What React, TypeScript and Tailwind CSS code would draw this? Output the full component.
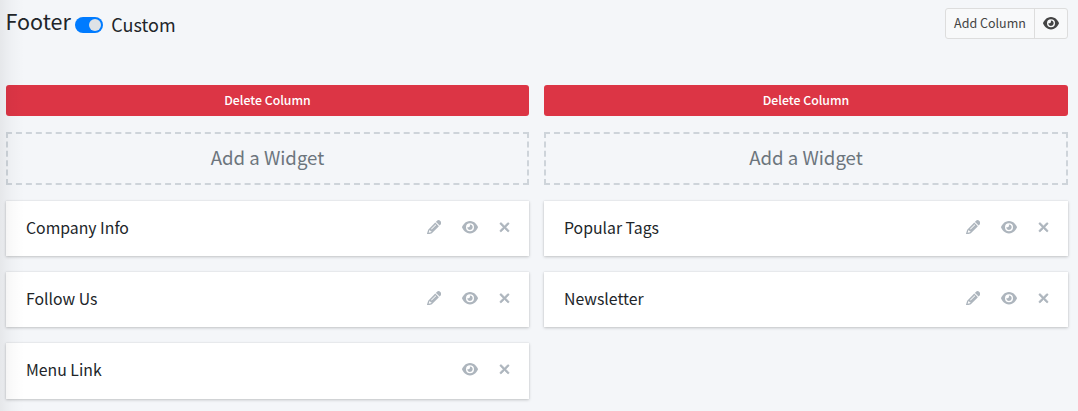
import { FaEye, FaPencil, FaXmark } from "react-icons/fa6";

type Widget = { name: string; editable: boolean };

const columns: Widget[][] = [
  [
    { name: "Company Info", editable: true },
    { name: "Follow Us", editable: true },
    { name: "Menu Link", editable: false },
  ],
  [
    { name: "Popular Tags", editable: true },
    { name: "Newsletter", editable: true },
  ],
];

function WidgetCard({ name, editable }: Widget) {
  return (
    <li className="flex h-[55px] items-start justify-between bg-white pt-[15px] pr-[19px] pl-[20px] shadow-[0_0_1px_rgba(0,0,0,0.125),0_1px_3px_rgba(0,0,0,0.2)] last:nth-3:h-[56px]">
      <span className="text-[15.8px] leading-6">{name}</span>
      <span className="mt-[3.5px] flex items-center gap-[21px] text-[#adb5bd]">
        {editable && (
          <button aria-label="Edit">
            <FaPencil className="size-[14.5px]" />
          </button>
        )}
        <button aria-label="Preview">
          <FaEye className="h-[14.5px] w-[16px]" />
        </button>
        <button aria-label="Remove">
          <FaXmark className="h-[14.5px] w-[11px] stroke-current [stroke-width:22]" />
        </button>
      </span>
    </li>
  );
}

function Column({ widgets }: { widgets: Widget[] }) {
  return (
    <section>
      <button className="block h-[31px] w-full rounded-[3px] bg-[#dc3545] pb-px text-[12.3px] leading-[30px] font-medium text-white">
        Delete Column
      </button>
      <button className="mt-4 block h-[53px] w-full border-2 border-dashed border-[#ced4da] pb-[4px] text-[18.6px] leading-[45px] text-[#6c757d]">
        Add a Widget
      </button>
      <ul className="mt-4 flex flex-col gap-4">
        {widgets.map((w) => (
          <WidgetCard key={w.name} {...w} />
        ))}
      </ul>
    </section>
  );
}

export default function App() {
  return (
    <main className="relative h-[411px] overflow-hidden bg-[#f4f6f9] pr-[10px] pl-[6px] font-['Noto_Sans_CJK_SC',sans-serif] text-[#212529]">
      <header className="flex h-[85px] items-start justify-between pt-2">
        <div className="flex items-start">
          <h1 className="-mt-px -ml-[0.5px] text-[21.5px] leading-[28px]">Footer</h1>
          <button
            role="switch"
            aria-checked="true"
            aria-label="Custom footer"
            className="mt-[9px] ml-[4.5px] flex h-4 w-7 items-center justify-end rounded-full bg-[#007bff] pr-[2px]"
          >
            <span className="size-3 rounded-full bg-[#dee2e6]" />
          </button>
          <span className="mt-[2px] ml-[8px] text-[18px] leading-[28px]">Custom</span>
        </div>
        <div className="flex h-[31px] rounded-[3px] border border-[#ddd] bg-[#f8f9fa] text-[#444]">
          <button className="w-[89px] border-r border-[#ddd] pb-[2px] text-[12.5px] leading-[27px]">Add Column</button>
          <button aria-label="Preview footer" className="flex w-[32px] items-center justify-center pb-px">
            <FaEye className="h-[14.5px] w-[16px]" />
          </button>
        </div>
      </header>
      <div className="grid grid-cols-[523px_524px] gap-[15px]">
        {columns.map((widgets, i) => (
          <Column key={i} widgets={widgets} />
        ))}
      </div>
      <div className="pointer-events-none absolute inset-y-0 left-0 w-6 bg-linear-to-r from-black/6 via-black/2 to-transparent" />
    </main>
  );
}
